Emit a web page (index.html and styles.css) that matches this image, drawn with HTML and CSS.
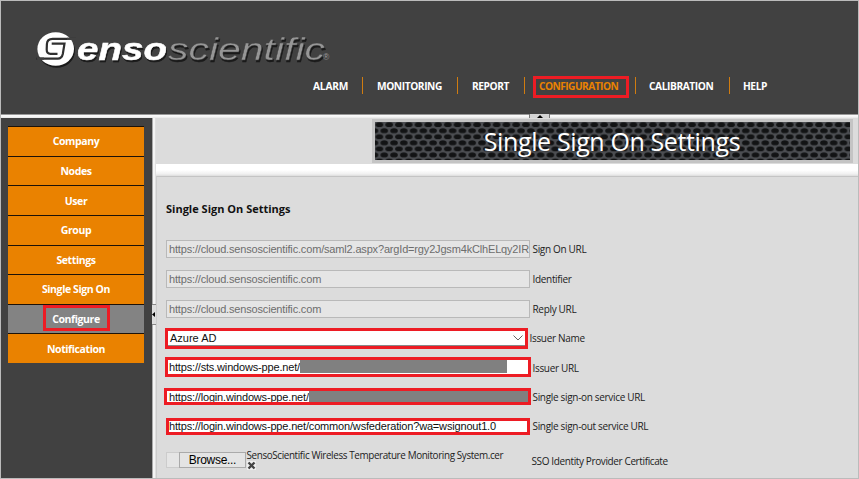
FILE: index.html
```html
<!DOCTYPE html>
<html lang="en">
<head>
<meta charset="utf-8">
<title>SensoScientific</title>
<link rel="stylesheet" href="styles.css">
</head>
<body>
<div class="app">
  <header class="header">
    <svg class="logo" width="300" height="44" viewBox="0 0 300 44">
      <ellipse class="shade" cx="19.700" cy="18" rx="18.300" ry="16.800" fill="#fff"/>
      <path d="M40 7.800H16.700Q11.200 7.800 10.900 13L10.700 18.500Q10.700 22.800 14.500 22.800H21.500M15.700 12.700H28.500L26.800 23Q25.800 27.600 21.800 27.600H0" fill="none" stroke="#303030" stroke-width="2.200"/>
      <path d="M31 6.700H40V11.500H38L36.500 8.900H31ZM0 24L2.500 26.500H8V28.700H5L2 31Z" fill="#414141"/>
      <g class="shade" font-family="Liberation Sans" font-style="italic">
        <text class="enso" x="41" y="29" fill="#fff" stroke="#fff" stroke-width=".5" textLength="90" lengthAdjust="spacingAndGlyphs">enso</text>
        <text class="sci" x="132" y="29" fill="#969696" stroke="#414141" stroke-width=".35" textLength="157" lengthAdjust="spacingAndGlyphs">scientific</text>
      </g>
      <text x="287" y="29" font-family="Liberation Sans" font-size="8.500" fill="#999">®</text>
    </svg>
    <nav class="nav">
      <a class="n1">ALARM</a><a class="n2">MONITORING</a><a class="n3">REPORT</a><a class="n4 current">CONFIGURATION</a><a class="n5">CALIBRATION</a><a class="n6">HELP</a>
    </nav>
  </header>
  <div class="hsplit"><span class="grip"><svg width="6" height="3" viewBox="0 0 6 3"><path d="M0 3L3 0L6 3Z"/></svg></span></div>
  <div class="body">
    <aside class="sidebar">
      <ul class="menu">
        <li>Company</li><li>Nodes</li><li>User</li><li>Group</li><li>Settings</li><li>Single Sign On</li><li class="active"><span>Configure</span></li><li>Notification</li>
      </ul>
    </aside>
    <div class="vsplit"><span class="vgrip"><svg width="3" height="5" viewBox="0 0 3 5"><path d="M3 0L0 2.500L3 5Z"/></svg></span></div>
    <main class="main">
      <div class="top">
        <div class="banner">
          <svg class="mesh" width="475" height="39">
            <defs>
              <pattern id="hex" x="-.5" y="-.5" width="9.770" height="12.100" patternUnits="userSpaceOnUse">
                <rect width="10" height="13" fill="#4c4e52"/>
                <g fill="#121314">
                  <ellipse cx="4.900" cy="3.200" rx="3.800" ry="2.500"/>
                  <ellipse cx="0" cy="9.200" rx="3.800" ry="2.500"/>
                  <ellipse cx="9.770" cy="9.200" rx="3.800" ry="2.500"/>
                </g>
              </pattern>
            </defs>
            <rect width="475" height="39" fill="url(#hex)"/>
          </svg>
          <h1>Single Sign On Settings</h1>
        </div>
      </div>
      <div class="fade"></div>
      <section class="panel">
        <h2>Single Sign On Settings</h2>
        <div class="row"><div class="field off">https://cloud.sensoscientific.com/saml2.aspx?argId=rgy2Jgsm4kClhELqy2IR</div><label>Sign On URL</label></div>
        <div class="row"><div class="field off">https://cloud.sensoscientific.com</div><label>Identifier</label></div>
        <div class="row r3"><div class="field off">https://cloud.sensoscientific.com</div><label>Reply URL</label></div>
        <div class="row"><div class="field red issuer">Azure AD<svg width="10" height="6" viewBox="0 0 10 6"><path d="M.5 .5L5 5L9.500 .5" fill="none" stroke="#666"/></svg></div><label>Issuer Name</label></div>
        <div class="row r5"><div class="field red url">https://sts.windows-ppe.net/<i class="mask"></i></div><label>Issuer URL</label></div>
        <div class="row r6"><div class="field red signon">https://login.windows-ppe.net/<i class="mask"></i></div><label>Single sign-on service URL</label></div>
        <div class="row"><div class="field red signout">https://login.windows-ppe.net/common/wsfederation?wa=wsignout1.0</div><label>Single sign-out service URL</label></div>
        <div class="row cert">
          <span class="blank"></span><span class="browse">Browse...</span>
          <div class="file">SensoScientific Wireless Temperature Monitoring System.cer<svg width="9" height="9" viewBox="0 0 9 9"><rect width="9" height="9" fill="#eee"/><path d="M1.500 1.500L7.500 7.500M7.500 1.500L1.500 7.500" stroke="#444" stroke-width="2.400"/></svg></div>
          <label>SSO Identity Provider Certificate</label>
        </div>
      </section>
    </main>
  </div>
</div>
</body>
</html>
```
FILE: styles.css
```css
* { box-sizing: border-box; }
body { margin: 0; font-family: "Open Sans", sans-serif; }
.app { width: 859px; height: 479px; border: 1px solid #bbb; display: flex; flex-direction: column; overflow: hidden; background: #dcdcdc; }
.header { height: 113px; background: #414141; display: flex; flex-direction: column; padding: 30px 0 0 35px; flex: none; }
.logo { display: block; flex: none; }
.shade { filter: drop-shadow(1px 2px 0 #1a1a1a); }
.enso { font-size: 32px; font-weight: bold; }
.sci { font-size: 31px; }
.nav { display: flex; margin: 2px 0 0 264px; font-size: 10.2px; font-weight: 700; color: #fff; letter-spacing: -.42px; }
.nav a { height: 17px; line-height: 19px; border-left: 1px solid #d07c10; padding-left: 14px; white-space: nowrap; }
.nav .n1 { width: 62px; padding-left: 13px; border: 0; letter-spacing: -.2px; }
.nav .n2 { width: 95px; }
.nav .n3 { width: 67px; }
.nav .n4 { width: 111px; position: relative; letter-spacing: -.55px; }
.nav .n5 { width: 94px; padding-left: 13px; }
.nav .n6 { padding-left: 13px; }
.nav .current { color: #ea8200; }
.current::after { content: ""; position: absolute; left: 8px; top: -1px; width: 90px; height: 16px; border: 3px solid #ed1c24; }
.hsplit { height: 4px; flex: none; background: linear-gradient(#999 0 1px, #fafafa 1px 2px, #e8e8e8); padding-left: 528px; }
.grip { display: flex; justify-content: center; width: 21px; height: 4px; background: #d4d4d4; border: solid #777; border-width: 0 1px; padding-top: 1px; }
.body { flex: 1; display: flex; min-height: 0; }
.sidebar { width: 151px; background: #414141; padding: 8px 8px 8px 7px; flex: none; }
.menu { list-style: none; margin: 0; padding: 0; height: 237px; display: grid; grid-template-rows: repeat(8, 1fr); color: #fff; font-size: 10.5px; font-weight: 700; letter-spacing: -.4px; }
.menu li { background: #ea8200; border-top: 1px solid #1c1208; display: flex; align-items: center; justify-content: center; }
.menu .active { background: #838383; }
.active span { width: 67px; height: 26px; border: 3px solid #ed1c24; text-align: center; line-height: 22px; margin-top: -2px; }
.vsplit { width: 4px; flex: none; background: linear-gradient(90deg, #aaa 0 1px, #f4f4f4 1px 3px, #ccc); padding-top: 186px; }
.vgrip { display: flex; height: 21px; align-items: center; background: #ddd; border: solid #888; border-width: 1px 0; }
.main { flex: 1; min-width: 0; }
.top { height: 46px; padding: 1px 0 0 216px; }
.banner { width: 481px; height: 44px; border: 3px solid #c4c4c4; position: relative; overflow: hidden; }
.mesh { display: block; }
.banner h1 { position: absolute; inset: 0; margin: 0; text-align: center; font-size: 25px; font-weight: 400; line-height: 38px; color: #fff; white-space: nowrap; letter-spacing: -.38px; padding-right: 1px; }
.fade { height: 12px; background: linear-gradient(#fff 0 6px, #f0f0f0 10px, #dcdcdc); }
.panel { border-top: 1px solid #c4c4c4; border-left: 1px solid #ccc; height: 302px; padding-left: 9px; }
h2 { margin: 0; height: 57px; padding-top: 24px; font-size: 11px; line-height: 16px; color: #111; }
.row { height: 30px; display: flex; align-items: center; }
.r3, .r5, .r6 { height: 29px; }
.field { width: 364px; height: 18px; flex: none; margin-right: 2px; padding: 0 2px; font: 11px/16px "Liberation Sans", sans-serif; letter-spacing: -.17px; white-space: nowrap; overflow: hidden; display: flex; align-items: center; color: #111; }
.off { border: 1px solid #b9b9b9; background: #e5e5e5; color: #6d6d6d; }
.red { border: 3px solid #ed1c24; background: #fff; padding: 0 1px; }
.issuer { width: 363px; height: 21px; margin-left: -1px; margin-right: 1px; padding: 0 2px; justify-content: space-between; box-shadow: inset 0 -1px #888; letter-spacing: 0; }
.url { width: 366px; height: 20px; margin: -1px 1px 0 -1px; }
.signon { width: 367px; height: 17px; margin-left: -2px; margin-right: 1px; padding: 0 0 0 2px; }
.signout { height: 17px; padding-left: 0; }
.mask { background: #808080; height: 13px; flex: 1; }
.url .mask { margin-right: 20px; align-self: flex-start; }
label, .file { color: #222; white-space: nowrap; }
label { font-size: 10px; line-height: 14px; letter-spacing: -.32px; padding-left: .5px; }
.cert { height: 37px; }
.cert label { padding-top: 2px; letter-spacing: -.38px; }
.blank { width: 13px; height: 16px; background: #e5e5e5; border: 1px solid #ccc; border-right: 0; }
.browse { width: 67px; height: 16px; border: 1px solid #aaa; background: #e4e4e4; font: 12px/14px "Liberation Sans", sans-serif; text-align: center; letter-spacing: -.3px; }
.file { width: 285px; font-size: 9.9px; letter-spacing: -.38px; line-height: 12px; display: flex; flex-direction: column; padding-left: .5px; }
```
